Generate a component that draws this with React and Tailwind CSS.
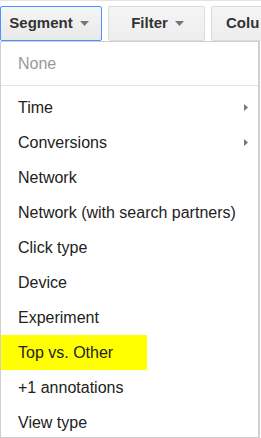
import React from "react";

const items = [
  { label: "Time", sub: true },
  { label: "Conversions", sub: true },
  { label: "Network" },
  { label: "Network (with search partners)" },
  { label: "Click type" },
  { label: "Device" },
  { label: "Experiment" },
  { label: "Top vs. Other", highlight: true },
  { label: "+1 annotations" },
  { label: "View type" },
];

const Caret = () => (
  <svg width="9" height="5" viewBox="0 0 9 5" className="ml-[7px]">
    <path d="M0 0 L9 0 L4.5 5 Z" fill="#777" />
  </svg>
);

const App = () => {
  return (
    <div
      className="relative h-[438px] w-[261px] overflow-hidden border-t border-[#e3e3e3] bg-white"
      style={{ fontFamily: '"Liberation Sans", Arial, sans-serif' }}
    >
      {/* toolbar */}
      <div className="flex h-[40px] gap-[6px] overflow-hidden pt-[5px]">
        <button className="flex h-[35px] w-[102px] shrink-0 items-center justify-center rounded-[2px] border border-[#4d90fe] bg-gradient-to-b from-[#f5f5f5] to-[#e9e9e9] pr-[4px] text-[15px] font-bold text-[#333]">
          Segment
          <Caret />
        </button>
        <button className="flex h-[35px] w-[97px] shrink-0 items-center justify-center rounded-[2px] border border-[#dcdcdc] bg-gradient-to-b from-[#f5f5f5] to-[#ededed] pl-[2px] text-[15px] font-bold text-[#333]">
          Filter
          <Caret />
        </button>
        <button className="flex h-[35px] w-[100px] shrink-0 items-center rounded-[2px] border border-[#dcdcdc] bg-gradient-to-b from-[#f5f5f5] to-[#ededed] pl-[14px] text-[15px] font-bold text-[#333]">
          Colu
        </button>
      </div>

      {/* dropdown menu */}
      <div className="h-[397px] w-[260px] overflow-hidden border border-r-[2px] border-[#cfcfcf] bg-white">
        <div className="pt-[4px]">
          <div className="flex h-[35px] items-center pl-[17px] text-[16px] text-[#999]">
            None
          </div>
          <div className="my-[4px] h-px bg-[#e5e5e5]" />
          {items.map((item) => (
            <div
              key={item.label}
              className={
                item.highlight
                  ? "flex h-[35px] w-[146px] items-center bg-[#ffff00] pl-[17px] text-[16px] text-[#222]"
                  : "flex h-[35px] items-center justify-between pl-[17px] pr-[10px] text-[16px] text-[#222]"
              }
            >
              <span>{item.label}</span>
              {item.sub && (
                <svg width="4" height="7" viewBox="0 0 4 7">
                  <path d="M0 0 L4 3.5 L0 7 Z" fill="#777" />
                </svg>
              )}
            </div>
          ))}
        </div>
      </div>
    </div>
  );
};

export default App;
